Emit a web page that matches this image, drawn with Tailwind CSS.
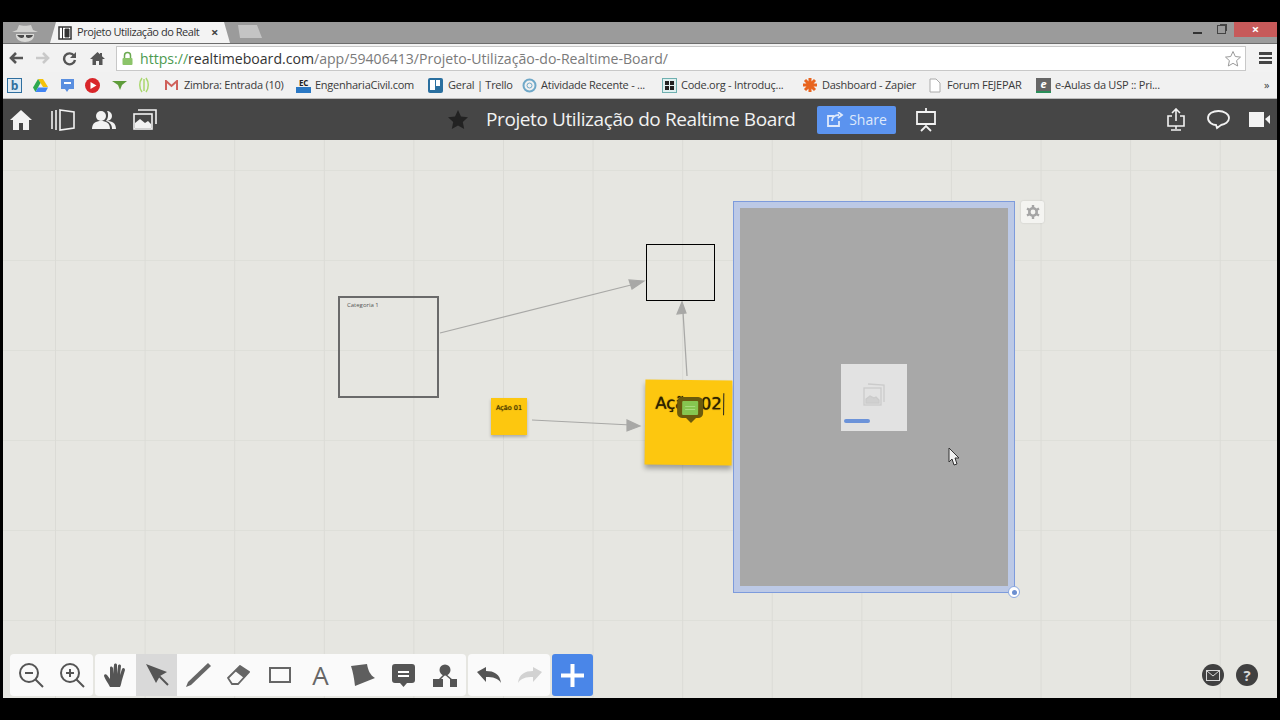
<!DOCTYPE html>
<html lang="pt">
<head>
  <meta charset="UTF-8">
  <title>Projeto Utilização do Realtime Board</title>
  <script src="https://cdn.jsdelivr.net/npm/@tailwindcss/browser@4"></script>
</head>
<body class="bg-black h-[720px] w-[1280px] overflow-hidden font-['Open_Sans','Liberation_Sans',sans-serif]">
  <div class="h-[22px]"></div>
  <div class="h-[676px] mx-[3px] flex flex-col">

    <!-- tab strip -->
    <div class="h-[21px] bg-[#9b9b9b] flex items-end relative">
      <div class="w-[44px] h-[21px] flex items-center justify-center">
        <svg width="34" height="20" viewBox="0 0 34 20"><path d="M4 9h26l-5-2-2-5c-3 1-9 1-12 0l-2 5z" fill="#d2d2d0"/><path d="M8 11h18c1 5-4 8-9 8s-10-3-9-8z" fill="#d9d9d7"/><path d="M9 12h7v2c-2 2-5 1-7-2zm9 0h7c-1 3-5 4-7 2z" fill="#4a4a4a"/></svg>
      </div>
      <div class="h-[21px] w-[180px] ml-[3px] bg-[#f3f3f3] rounded-t-[3px] flex items-center pl-[8px] pr-[12px] text-[11px] tracking-[-0.45px] text-[#333] [clip-path:polygon(6px_0,174px_0,180px_100%,0_100%)]">
        <svg class="shrink-0 mr-[5px]" width="14" height="14" viewBox="0 0 14 14"><rect x="1" y="1" width="12" height="12" fill="#fff" stroke="#333" stroke-width="1.5"/><path d="M4.500 1v12M7 3h4v8H7z" fill="#333" stroke="#333"/></svg>
        <span class="whitespace-nowrap">Projeto Utilização do Realt</span>
        <span class="ml-auto text-[#444] text-[13px] font-bold">×</span>
      </div>
      <div class="w-[27px] h-[13px] ml-[5px] mb-[5px] bg-[#c4c4c4] rounded-t-[3px] [clip-path:polygon(3px_0,22px_0,27px_100%,5px_100%)]"></div>
      <div class="ml-auto self-start flex items-center h-[15px]">
        <div class="w-[9px] h-[2px] bg-[#333] mr-[15px] mt-[6px]"></div>
        <div class="w-[9px] h-[9px] border border-[#444] mr-[8px] shadow-[2px_-2px_0_-1px_#444]"></div>
        <div class="w-[43px] h-[15px] bg-[#c75a5a] text-white text-[13px] leading-[15px] text-center font-bold">×</div>
      </div>
    </div>

    <!-- address bar -->
    <div class="h-[29px] bg-[#f2f2f2] flex items-center border-t border-[#6d6d6d]">
      <div class="w-[113px] flex items-center shrink-0">
        <svg class="ml-[5px]" width="16" height="14" viewBox="0 0 16 14"><path d="M15 7H4M8 2 3 7l5 5" fill="none" stroke="#555" stroke-width="2.600"/></svg>
        <svg class="ml-[11px]" width="16" height="14" viewBox="0 0 16 14"><path d="M1 7h11M8 2l5 5-5 5" fill="none" stroke="#c9c9c9" stroke-width="2.600"/></svg>
        <svg class="ml-[11px]" width="15" height="15" viewBox="0 0 15 15"><path d="M12 4.500A5.500 5.500 0 1 0 13 9" fill="none" stroke="#555" stroke-width="2.400"/><path d="M14 1v6H8z" fill="#555"/></svg>
        <svg class="ml-[13px]" width="15" height="15" viewBox="0 0 15 15"><path d="M7.500 1 0 8h2.500v6h3.500v-4h3v4h3.500V8H15l-3-2.800V2h-2v1.300z" fill="#555"/></svg>
      </div>
      <div class="flex-1 h-[25px] mr-[13px] mt-[1px] bg-white border border-[#c8c8c8] flex items-center pl-[4px] text-[14.100px] whitespace-nowrap">
        <svg class="mr-[6px]" width="13" height="15" viewBox="0 0 13 15"><path d="M3.500 7V4.500a3 3 0 0 1 6 0V7" fill="none" stroke="#6aa84f" stroke-width="1.500"/><rect x="1.500" y="7" width="10" height="7" rx="1" fill="#8cc46a"/></svg>
        <span class="text-[#4c9a50]">https://</span><span class="text-[#333]">realtimeboard.com</span><span class="text-[#7a7a7a]">/app/59406413/Projeto-Utilização-do-Realtime-Board/</span>
        <svg class="ml-auto mr-[3px]" width="18" height="18" viewBox="0 0 18 18"><path d="m9 1.500 2.300 5 5.200.6-3.900 3.500 1.100 5.400L9 13.300 4.300 16l1.100-5.400L1.500 7.100l5.200-.6z" fill="#fff" stroke="#9a9a9a"/></svg>
      </div>
      <div class="flex flex-col gap-[2px] mr-[5px]">
        <div class="w-[13px] h-[2.500px] bg-[#444]"></div>
        <div class="w-[13px] h-[2.500px] bg-[#444]"></div>
        <div class="w-[13px] h-[2.500px] bg-[#444]"></div>
      </div>
    </div>

    <!-- bookmarks -->
    <div class="h-[27px] bg-[#f1f1f1] flex items-center pl-[4px] text-[11px] tracking-[-0.25px] text-[#3a3a3a] whitespace-nowrap border-b border-[#bbb]">
      <div class="w-[26px]"><div class="w-[15px] h-[15px] border border-[#2f6f9f] bg-[#dfeaf3] text-[#2f6f9f] text-[12px] leading-[13px] text-center font-bold">b</div></div>
      <div class="w-[27px]"><svg width="15" height="14" viewBox="0 0 15 14"><path d="M5 1h5l5 8h-5z" fill="#f4c20d"/><path d="M5 1 0 9.500 2.500 14 7.500 5z" fill="#2da94f"/><path d="M5 9.500h10L12.500 14h-10z" fill="#4285f4"/></svg></div>
      <div class="w-[25px]"><svg width="15" height="15" viewBox="0 0 15 15"><path d="M1 1h13v10H9l-2 3-2-3H1z" fill="#5a8fe0"/><rect x="4" y="4" width="7" height="2" fill="#fff"/></svg></div>
      <div class="w-[27px]"><svg width="15" height="15" viewBox="0 0 15 15"><circle cx="7.500" cy="7.500" r="7.500" fill="#d9262a"/><path d="m5.500 4 6 3.500-6 3.500z" fill="#fff"/></svg></div>
      <div class="w-[26px]"><svg width="15" height="11" viewBox="0 0 15 11"><path d="M0 1h15l-5 4-2 5-2-5z" fill="#5e9c3a"/></svg></div>
      <div class="w-[27px]"><svg width="12" height="16" viewBox="0 0 12 16"><path d="M4 1c-3 4-3 10 0 14M8 1c3 4 3 10 0 14M6 2v12" fill="none" stroke="#a9d86e" stroke-width="1.500"/></svg></div>
      <div class="w-[131px] flex items-center">
        <svg class="mr-[6px]" width="13" height="11" viewBox="0 0 13 11"><path d="M1 10V1l5.500 5L12 1v9" fill="none" stroke="#d0605a" stroke-width="2"/></svg>Zimbra: Entrada (10)
      </div>
      <div class="w-[132px] flex items-center">
        <div class="w-[15px] h-[15px] mr-[4px] flex flex-col"><div class="h-[9px] text-[8px] leading-[9px] font-bold text-[#222] text-center">EC</div><div class="h-[6px] bg-[#2a78c4]"></div></div>EngenhariaCivil.com
      </div>
      <div class="w-[94px] flex items-center">
        <div class="w-[15px] h-[15px] mr-[5px] bg-[#2a6f9f] rounded-[2px] flex gap-[1px] p-[2px]"><div class="w-[5px] h-[10px] bg-white"></div><div class="w-[4px] h-[6px] bg-white"></div></div>Geral | Trello
      </div>
      <div class="w-[140px] flex items-center">
        <svg class="mr-[4px]" width="15" height="15" viewBox="0 0 15 15"><circle cx="7.500" cy="7.500" r="6" fill="none" stroke="#6fa8c8" stroke-width="2"/><circle cx="7.500" cy="7.500" r="2.500" fill="none" stroke="#6fa8c8"/></svg>Atividade Recente - ...
      </div>
      <div class="w-[140px] flex items-center">
        <div class="w-[15px] h-[15px] mr-[4px] bg-[#dff0f0] border border-[#6fb0b0] grid grid-cols-2 gap-[1px] p-[2px]"><div class="bg-[#222]"></div><div class="bg-[#222]"></div><div class="bg-[#222]"></div><div class="bg-[#222]"></div></div>Code.org - Introduç...
      </div>
      <div class="w-[127px] flex items-center">
        <svg class="mr-[4px]" width="16" height="16" viewBox="0 0 16 16"><path d="M8 1v14M1 8h14M3 3l10 10M13 3 3 13" stroke="#e8641e" stroke-width="3"/></svg>Dashboard - Zapier
      </div>
      <div class="w-[107px] flex items-center">
        <svg class="mr-[6px]" width="12" height="15" viewBox="0 0 12 15"><path d="M1 1h6l4 4v9H1z" fill="#fff" stroke="#aaa"/></svg>Forum FEJEPAR
      </div>
      <div class="w-[228px] flex items-center">
        <div class="w-[15px] h-[15px] mr-[4px] bg-[#666] border-b-2 border-[#2a8f5a] text-white text-[11px] leading-[12px] text-center font-bold italic">e</div>e-Aulas da USP :: Pri...
      </div>
      <div class="text-[11px]">»</div>
    </div>

    <!-- app toolbar -->
    <div class="h-[41px] bg-[#464646] flex items-center relative text-[#f2f2f2]">
      <svg class="ml-[7px]" width="22" height="20" viewBox="0 0 22 20"><path d="M11 0 0 10h3v10h6v-7h4v7h6V10h3z" fill="#f2f2f2"/></svg>
      <svg class="ml-[19px]" width="24" height="22" viewBox="0 0 24 22" fill="none" stroke="#f2f2f2" stroke-width="1.600"><path d="M1 2v18M5 1v20"/><path d="M9 1 23 3v16L9 21z"/></svg>
      <svg class="ml-[17px]" width="24" height="20" viewBox="0 0 24 20" fill="#f2f2f2"><circle cx="9" cy="6" r="5"/><path d="M0 19c0-6 4-8 9-8s9 2 9 8z"/><path d="M15 1a5 5 0 0 1 0 10c5 0 9 2 9 8h-4c0-4-2-7-6-8 2-2 3-7 1-10z"/></svg>
      <svg class="ml-[17px]" width="24" height="21" viewBox="0 0 24 21"><path d="M5 1h18v14" fill="none" stroke="#f2f2f2" stroke-width="1.600"/><rect x="1" y="5" width="18" height="15" fill="none" stroke="#f2f2f2" stroke-width="1.600"/><path d="M2 19v-5l5-4 5 4 3-2 3 3v4z" fill="#f2f2f2"/></svg>
      <svg class="ml-[291px]" width="20" height="19" viewBox="0 0 20 19"><path d="m10 0 3 6.500 7 .8-5.200 4.700 1.400 7L10 15.500 3.800 19l1.400-7L0 7.300l7-.8z" fill="#222"/></svg>
      <span class="ml-[18px] text-[19px] whitespace-nowrap tracking-[-0.4px]">Projeto Utilização do Realtime Board</span>
      <div class="ml-[22px] w-[79px] h-[28px] bg-[#5b93ef] rounded-[2px] flex items-center justify-center text-[14px] text-[#dfe9fb]">
        <svg class="mr-[5px]" width="17" height="15" viewBox="0 0 17 15" fill="none" stroke="#dfe9fb" stroke-width="1.800"><path d="M12 9v5H1V4h6"/><path d="M5 9c0-4 3-6 7-6M11 0l4 3-4 3" /></svg>Share
      </div>
      <svg class="ml-[20px]" width="20" height="24" viewBox="0 0 20 24" fill="none" stroke="#f2f2f2" stroke-width="1.800"><path d="M10 0v3M1 4h18v12H1zM5 23l5-5 5 5"/></svg>
      <svg class="ml-auto" width="20" height="24" viewBox="0 0 20 24" fill="none" stroke="#f2f2f2" stroke-width="1.600"><path d="M6 8H2v10h16V8h-4M10 13V2M6 5l4-4 4 4M10 18v3M5 22h10"/></svg>
      <svg class="ml-[21px]" width="23" height="21" viewBox="0 0 23 21" fill="none" stroke="#f2f2f2" stroke-width="1.800"><path d="M11.500 2C6 2 1 4.500 1 9s5 7 8 7l1 3 4-3c4-.5 8-3 8-7s-5-7-10.500-7z"/></svg>
      <svg class="ml-[19px] mr-[7px]" width="21" height="15" viewBox="0 0 21 15" fill="#f2f2f2"><rect width="15" height="15"/><path d="m16 7 5-4v9z"/></svg>
    </div>

    <!-- board -->
    <div class="flex-1 relative overflow-hidden bg-[#e6e6e1] bg-[linear-gradient(to_right,#dbdbd6_1px,transparent_1px),linear-gradient(to_bottom,#dedfd9_1px,transparent_1px)] bg-[size:89.600px_90px] bg-[position:52px_30px]">

      <svg class="absolute left-0 top-0" width="1274" height="558" viewBox="0 0 1274 558" fill="none" stroke="#a8a8a6" stroke-width="1.200">
        <path d="M437 193 632 144"/><path d="m641 141-15-1 3 9z" fill="#a8a8a6"/>
        <path d="M529 280 628 285"/><path d="m637 286-13-6 0 11z" fill="#a8a8a6"/>
        <path d="M684 236 680 172"/><path d="m679 162-5 12 9-1z" fill="#a8a8a6"/>
      </svg>

      <div class="absolute left-[335px] top-[156px] w-[101px] h-[102px] border-2 border-[#6a6a6a] text-[6px] text-[#555] pl-[7px] pt-[3px]">Categoria 1</div>
      <div class="absolute left-[643px] top-[104px] w-[69px] h-[57px] border border-black"></div>

      <div class="absolute left-[488px] top-[258px] w-[36px] h-[37px] bg-[#fdc70f] shadow-[0_2px_3px_rgba(0,0,0,.25)] text-[6.500px] font-['DejaVu_Sans',sans-serif] text-[#3a2e00] text-center pt-[6px] [text-shadow:0_0_1px_#6a5400]">Ação 01</div>

      <div class="absolute left-[642px] top-[240px] w-[87px] h-[85px] bg-[#fdc70f] shadow-[0_4px_5px_rgba(0,0,0,.3)] rotate-[0.6deg]">
        <div class="absolute left-[10px] top-[13px] text-[16.500px] leading-[22px] font-['DejaVu_Sans',sans-serif] text-[#2e2200] whitespace-nowrap border-r border-[#222] pr-[1px] [text-shadow:0_0_1px_#2e2200]">Ação 02</div>
        <div class="absolute left-[32px] top-[17px] w-[26px] h-[21px] rounded-[5px] bg-[#6b5a0c] flex items-center justify-center">
          <div class="w-[16px] h-[14px] bg-[#86c650] rounded-[1px] flex flex-col items-center justify-center gap-[2px]"><div class="w-[10px] h-[1px] bg-[#a8dc7c]"></div><div class="w-[10px] h-[1px] bg-[#a8dc7c]"></div></div>
        </div>
        <div class="absolute left-[41px] top-[38px] w-0 h-0 border-x-[5px] border-x-transparent border-t-[5px] border-t-[#6b5a0c]"></div>
      </div>

      <!-- image frame being dropped -->
      <div class="absolute left-[730px] top-[61px] w-[282px] h-[392px] border border-[#7d9bdc] bg-[#bcc9e6] p-[6px]">
        <div class="w-full h-full bg-[#a8a8a8] flex items-center justify-center">
          <div class="w-[66px] h-[67px] bg-[#e2e2e2] relative flex items-center justify-center">
            <svg class="-mt-[6px]" width="24" height="24" viewBox="0 0 24 24" fill="none" stroke="#cbcbcb" stroke-width="1.300"><path d="M6 2 22 3v17"/><rect x="2" y="6" width="17" height="17"/><path d="M4 21v-4l4-3 4 2 2-1 3 3v3z" fill="#d0d0d0"/></svg>
            <div class="absolute left-[3px] bottom-[8px] w-[26px] h-[4px] rounded-full bg-[#6c93d9]"></div>
          </div>
        </div>
        <div class="absolute -right-[6px] -bottom-[6px] w-[12px] h-[12px] rounded-full bg-white border border-[#8aa8e0] flex items-center justify-center">
          <div class="w-[5px] h-[5px] rounded-full bg-[#6c8fd0]"></div>
        </div>
      </div>

      <div class="absolute left-[1018px] top-[61px] w-[23px] h-[22px] bg-[#f4f4f1] rounded-[2px] shadow-[0_0_2px_rgba(0,0,0,.15)] flex items-center justify-center">
        <svg width="14" height="14" viewBox="0 0 14 14"><circle cx="7" cy="7" r="3.700" fill="none" stroke="#a5a5a5" stroke-width="2.600"/><path d="M7 0v3M7 11v3M1 3.500l2.600 1.500M10.400 9 13 10.500M1 10.500 3.600 9M10.400 5 13 3.500" stroke="#a5a5a5" stroke-width="2.400"/></svg>
      </div>

      <!-- mouse pointer -->
      <svg class="absolute left-[944px] top-[307px]" width="14" height="20" viewBox="0 0 14 20"><path d="M2 1v14l3-3 2 6 3-1-2-6h4z" fill="#f2f2f2" stroke="#333"/></svg>

      <!-- bottom toolbar -->
      <div class="absolute left-[7px] bottom-[2px] h-[42px] flex gap-[2px]">
        <div class="flex bg-[#fafafa] rounded-[4px]">
          <div class="w-[41px] flex items-center justify-center"><svg width="26" height="26" viewBox="0 0 26 26" fill="none" stroke="#555" stroke-width="2"><circle cx="11" cy="11" r="9"/><path d="M7 11h8M17.500 17.500 25 25"/></svg></div>
          <div class="w-[42px] flex items-center justify-center"><svg width="26" height="26" viewBox="0 0 26 26" fill="none" stroke="#555" stroke-width="2"><circle cx="11" cy="11" r="9"/><path d="M7 11h8M11 7v8M17.500 17.500 25 25"/></svg></div>
        </div>
        <div class="flex bg-[#fafafa] rounded-[4px] w-[371px] pl-[0px]">
          <div class="w-[41px] flex items-center justify-center"><svg width="24" height="25" viewBox="0 0 24 25" fill="#555"><path d="M6 24C4 20 1 16 0 13c0-2 2-2 3-1l3 4V5c0-2 2-2 3 0v6l1-9c0-2 3-2 3 0v9l1-8c0-2 3-2 3 0l-1 9 2-6c1-2 3-1 3 1l-3 10c-1 4-1 5-2 7z"/></svg></div>
          <div class="w-[41px] flex items-center justify-center bg-[#d9d9d9]"><svg width="24" height="24" viewBox="0 0 24 24"><path d="M1 1 22 9l-7 4-4 7z" fill="#555"/><path d="m13 12 10 10" stroke="#555" stroke-width="2"/></svg></div>
          <div class="w-[41px] flex items-center justify-center"><svg width="26" height="26" viewBox="0 0 26 26"><path d="M23 1 26 4 6 23 1 25 3 20z" fill="#666"/></svg></div>
          <div class="w-[41px] flex items-center justify-center"><svg width="23" height="20" viewBox="0 0 23 20"><path d="M1 13 13 1l9 6-11 12H5z" fill="none" stroke="#666" stroke-width="1.800"/><path d="M13 1l9 6-5 6-9-7z" fill="#666"/></svg></div>
          <div class="w-[41px] flex items-center justify-center"><div class="w-[22px] h-[16px] border-2 border-[#666]"></div></div>
          <div class="w-[41px] flex items-center justify-center text-[26px] text-[#666]">A</div>
          <div class="w-[41px] flex items-center justify-center"><svg width="27" height="22" viewBox="0 0 27 22"><path d="M3 2 19 0c1 6 3 11 8 14L7 22C6 14 5 8 3 2z" fill="#5e5e5e"/></svg></div>
          <div class="w-[42px] flex items-center justify-center"><svg width="23" height="23" viewBox="0 0 23 23"><path d="M3 0h17a3 3 0 0 1 3 3v13a3 3 0 0 1-3 3h-5l-3.500 4L8 19H3a3 3 0 0 1-3-3V3a3 3 0 0 1 3-3z" fill="#555"/><path d="M6 7h11v2H6zM6 11h11v2H6z" fill="#fff"/></svg></div>
          <div class="w-[41px] flex items-center justify-center"><svg width="24" height="23" viewBox="0 0 24 23" fill="#555"><circle cx="12" cy="6" r="5.500"/><rect y="15" width="10" height="8"/><rect x="17" y="15" width="7" height="8"/><path d="M12 10 6 16M12 10l7 6" stroke="#555" stroke-width="1.500"/></svg></div>
        </div>
        <div class="flex bg-[#fafafa] rounded-[4px]">
          <div class="w-[41px] flex items-center justify-center"><svg width="24" height="16" viewBox="0 0 24 16"><path d="M0 5l9-5v4c8 0 14 3 15 12-3-5-8-6-15-6v5z" fill="#555"/></svg></div>
          <div class="w-[41px] flex items-center justify-center"><svg width="24" height="16" viewBox="0 0 24 16"><path d="M24 5l-9-5v4C7 4 1 7 0 16c3-5 8-6 15-6v5z" fill="#d2d2d2"/></svg></div>
        </div>
        <div class="w-[41px] bg-[#4a86e8] rounded-[3px] flex items-center justify-center">
          <svg width="23" height="23" viewBox="0 0 23 23"><path d="M11.500 0v23M0 11.500h23" stroke="#fff" stroke-width="4"/></svg>
        </div>
      </div>

      <div class="absolute right-[19px] bottom-[12px] flex gap-[12px]">
        <div class="w-[22px] h-[22px] rounded-full bg-[#404040] flex items-center justify-center">
          <svg width="14" height="11" viewBox="0 0 14 11" fill="none" stroke="#d8d8d8"><rect x=".5" y=".5" width="13" height="10"/><path d="m1 1 6 5 6-5"/></svg>
        </div>
        <div class="w-[22px] h-[22px] rounded-full bg-[#404040] flex items-center justify-center text-[#d8d8d8] text-[15px] font-bold">?</div>
      </div>
    </div>
  </div>
</body>
</html>
